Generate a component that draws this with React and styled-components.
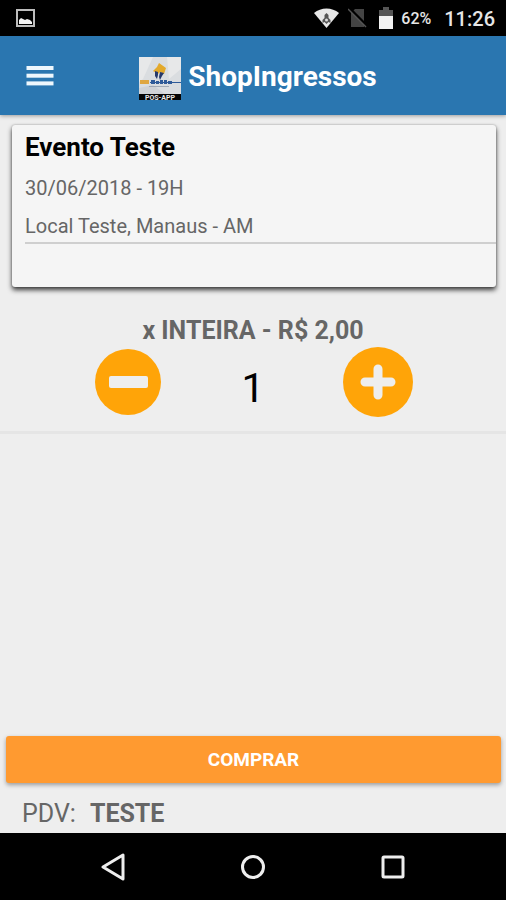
import React, { useState } from "react";
import styled, { createGlobalStyle } from "styled-components";

const GlobalStyle = createGlobalStyle`
  * {
    box-sizing: border-box;
  }
  body {
    margin: 0;
    background: #eeeeee;
    font-family: Roboto, "Noto Sans", sans-serif;
  }
  h1, h2, p {
    margin: 0;
  }
  button {
    border: none;
    padding: 0;
    background: none;
    font-family: inherit;
    cursor: pointer;
  }
  svg {
    display: block;
  }
`;

const Screen = styled.div`
  display: flex;
  flex-direction: column;
  min-height: 100vh;
`;

const StatusBar = styled.div`
  display: flex;
  align-items: center;
  height: 36px;
  padding: 0 11px 0 16px;
  background: #000;
  color: #e6e6e6;
`;
const StatusIcons = styled.div`
  display: flex;
  align-items: center;
  gap: 9px;
  margin-left: auto;
`;
const Battery = styled.span`
  padding-top: 2px;
  margin-left: 8px;
  font-size: 16px;
  font-weight: 500;
  line-height: 34px;
`;
const Clock = styled.time`
  padding-top: 2px;
  margin-left: 13px;
  font-size: 20px;
  font-weight: 500;
  line-height: 34px;
`;

const Header = styled.header`
  display: flex;
  align-items: center;
  height: 79px;
  padding-right: 70px;
  background: #2a76b0;
  box-shadow: 0 1px 4px rgba(0, 0, 0, 0.35);
`;
const MenuButton = styled.button`
  display: flex;
  justify-content: center;
  width: 80px;
`;
const Brand = styled.div`
  display: flex;
  flex: 1;
  align-items: flex-end;
  justify-content: center;
  gap: 7px;
  padding-top: 3px;
`;
const Title = styled.h1`
  color: #fff;
  font-size: 28px;
  font-weight: 700;
  line-height: 46px;
`;

const Main = styled.main`
  flex: 1;
`;

const Card = styled.section`
  margin: 10px 10px 0 12px;
  padding: 2px 0 43px 13px;
  border-radius: 3px;
  background: #f5f5f5;
  box-shadow: 0 3px 5px rgba(0, 0, 0, 0.75), 0 0 2px rgba(0, 0, 0, 0.3);
`;
const EventName = styled.h2`
  color: #000;
  font-size: 26px;
  font-weight: 700;
  line-height: 40px;
`;
const EventInfo = styled.p`
  color: #666;
  font-size: 20px;
  line-height: 32px;
`;
const EventDetails = styled.div`
  display: grid;
  gap: 6px;
  padding-top: 5px;
  border-bottom: 2px solid #cfcfcf;
`;

const Ticket = styled.section`
  padding: 31px 0 14px;
  border-bottom: 3px solid #e5e5e5;
`;
const TicketName = styled.h2`
  color: #666;
  font-size: 25px;
  font-weight: 700;
  line-height: 26px;
  text-align: center;
`;
const Counter = styled.div`
  display: grid;
  grid-template-columns: repeat(3, 1fr);
  align-items: center;
  justify-items: center;
  width: 74%;
  height: 70px;
  margin: 3px auto 0;
`;
const RoundButton = styled.button`
  width: ${(props) => props.$size}px;
  height: ${(props) => props.$size}px;
  border-radius: 50%;
  background: #ffa408;
`;
const Amount = styled.output`
  padding-top: 12px;
  color: #000;
  font-size: 41px;
  line-height: 48px;
`;

const Footer = styled.footer`
  padding: 0 5px 0 6px;
`;
const BuyButton = styled.button`
  width: 100%;
  height: 47px;
  border-radius: 3px;
  background: #ff9a30;
  box-shadow: 0 2px 4px rgba(0, 0, 0, 0.35);
  color: #fff;
  font-size: 19px;
  font-weight: 700;
`;
const SalePoint = styled.p`
  display: flex;
  gap: 14px;
  padding: 14px 0 2px 16px;
  color: #666;
  font-size: 25px;
  line-height: 34px;
`;

const NavBar = styled.nav`
  display: flex;
  align-items: center;
  justify-content: space-between;
  height: 67px;
  padding: 0 20%;
  background: #000;
`;
const NavButton = styled.button`
  width: 24px;
  height: 28px;
`;

const PictureIcon = () => (
  <svg width="19" height="18" viewBox="0 0 19 18">
    <rect x="1" y="1" width="17" height="16" fill="none" stroke="#bdbdbd" strokeWidth="2" />
    <path d="M3 15V11l2-2 2 1 2 1 2-1 3 1 2 2v2z" fill="#f5f5f5" />
  </svg>
);

const WifiIcon = () => (
  <svg width="25" height="20" viewBox="0 0 25 20">
    <path d="M0 5C7-1 18-1 25 5L12.500 20z" fill="#e8e8e8" />
    <path d="M12.500 5l2 2v3l2 2v3l-2-1-2 2-2-2-2 1v-3l2-2V7z" fill="#555" />
    <circle cx="12.500" cy="12" r="1.500" fill="#ddd" />
  </svg>
);

const NoSimIcon = () => (
  <svg width="19" height="20" viewBox="0 0 19 20">
    <path d="M7 1h9v18H3V5z" fill="#444" />
    <path d="M1 0l18 18" stroke="#000" strokeWidth="3" />
    <path d="M0 1l18 18" stroke="#555" strokeWidth="1.500" />
  </svg>
);

const BatteryIcon = () => (
  <svg width="17" height="22" viewBox="-3 0 17 22">
    <path d="M0 3h4V0h6v3h4v7H0z" fill="#555" />
    <path d="M0 9h14v13H0z" fill="#f2f2f2" />
  </svg>
);

const MenuIcon = () => (
  <svg width="28" height="20" viewBox="0 0 28 20" fill="#eef7fd">
    <rect x="0.500" y="0" width="27" height="4" />
    <rect x="0.500" y="7.700" width="27" height="4" />
    <rect x="0.500" y="15.400" width="27" height="4" />
  </svg>
);

const Logo = () => (
  <svg width="42" height="43" viewBox="0 0 42 43">
    <rect width="42" height="37" fill="#dadde0" />
    <path d="M0 0h14L4 22 0 25zM28 0h14v12L30 22z" fill="#e7e8e9" />
    <path d="M0 31l14-3 12 9H0z" fill="#cfd2d6" />
    <path d="M20 6l7 5-2 6-4-2-2 2-5-3 4-4z" fill="#e3a92b" />
    <path d="M16 14l3 1v3l-1 4-2-3zM21 15l4 1-2 3-2 4-1-3z" fill="#26396b" />
    <path d="M1 23h9v4H1z" fill="#dfa640" />
    <path d="M12 23h4v4h-4zM17 24h3v3h-3zM21 23h3v4h-3zM25 23h3v4h-3zM29 24h4v3h-4z" fill="#2f5b99" />
    <path d="M11 25.500h31" stroke="#2f5b99" strokeWidth="1" />
    <path d="M10 29.500h20" stroke="#8995a5" strokeWidth="0.700" />
    <rect y="37" width="42" height="6" fill="#050505" />
    <text x="21" y="42.500" fill="#e8e8e8" fontSize="7" fontWeight="700" textAnchor="middle">
      POS-APP
    </text>
  </svg>
);

const MinusIcon = () => (
  <svg width="100%" height="100%" viewBox="0 0 66 66">
    <rect x="14" y="27" width="39" height="12" rx="2" fill="#eee" />
  </svg>
);

const PlusIcon = () => (
  <svg width="100%" height="100%" viewBox="0 0 70 70">
    <path d="M35 22v26M22 35h26" stroke="#eee" strokeWidth="9" strokeLinecap="round" />
  </svg>
);

const App = () => {
  const [amount, setAmount] = useState(1);

  return (
    <Screen>
      <GlobalStyle />
      <StatusBar>
        <PictureIcon />
        <StatusIcons>
          <WifiIcon />
          <NoSimIcon />
          <BatteryIcon />
        </StatusIcons>
        <Battery>62%</Battery>
        <Clock>11:26</Clock>
      </StatusBar>
      <Header>
        <MenuButton aria-label="Menu">
          <MenuIcon />
        </MenuButton>
        <Brand>
          <Logo />
          <Title>ShopIngressos</Title>
        </Brand>
      </Header>
      <Main>
        <Card>
          <EventName>Evento Teste</EventName>
          <EventDetails>
            <EventInfo>30/06/2018 - 19H</EventInfo>
            <EventInfo>Local Teste, Manaus - AM</EventInfo>
          </EventDetails>
        </Card>
        <Ticket>
          <TicketName>x INTEIRA - R$ 2,00</TicketName>
          <Counter>
            <RoundButton
              $size={66}
              aria-label="Remover"
              onClick={() => setAmount(Math.max(0, amount - 1))}
            >
              <MinusIcon />
            </RoundButton>
            <Amount>{amount}</Amount>
            <RoundButton
              $size={70}
              aria-label="Adicionar"
              onClick={() => setAmount(amount + 1)}
            >
              <PlusIcon />
            </RoundButton>
          </Counter>
        </Ticket>
      </Main>
      <Footer>
        <BuyButton>COMPRAR</BuyButton>
        <SalePoint>
          <span>PDV:</span>
          <strong>TESTE</strong>
        </SalePoint>
      </Footer>
      <NavBar>
        <NavButton aria-label="Voltar">
          <svg width="24" height="28" viewBox="0 0 24 28">
            <path d="M22 2v24L2 14z" fill="none" stroke="#eee" strokeWidth="3" strokeLinejoin="round" />
          </svg>
        </NavButton>
        <NavButton aria-label="Início">
          <svg width="24" height="28" viewBox="0 0 24 28">
            <circle cx="12" cy="14" r="10.500" fill="none" stroke="#eee" strokeWidth="3" />
          </svg>
        </NavButton>
        <NavButton aria-label="Recentes">
          <svg width="24" height="28" viewBox="0 0 24 28">
            <rect x="2" y="4" width="20" height="20" rx="1" fill="none" stroke="#eee" strokeWidth="3" />
          </svg>
        </NavButton>
      </NavBar>
    </Screen>
  );
};

export default App;
